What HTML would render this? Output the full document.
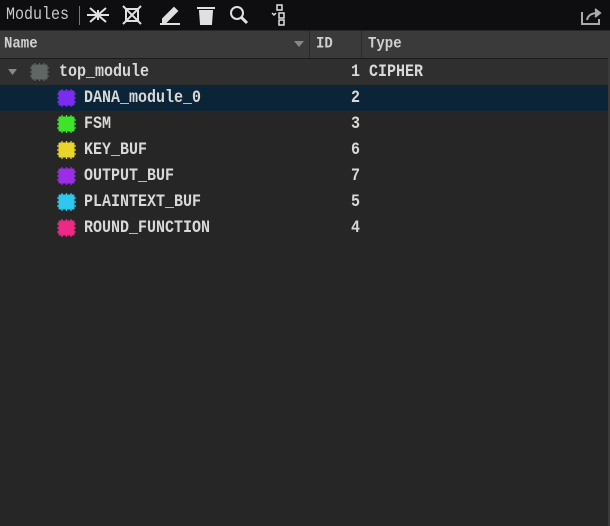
<!DOCTYPE html>
<html><head><style>
body{margin:0;width:610px;height:526px;background:#262626;overflow:hidden;font-family:"Liberation Mono",monospace;color:#dcdcdc;font-size:15px;position:relative}
.tb{position:absolute;left:0;top:0;width:610px;height:30px;background:#0e0e10}
.tb .t{position:absolute;left:6px;top:5px;color:#c8c8c8;font-size:15px;transform:scaleY(1.15);transform-origin:left top}
.hdr{position:absolute;left:0;top:31px;width:610px;height:27px;background:#3a3a3a;border-bottom:1px solid #1c1c1c}
.hdr span{position:absolute;top:4px;color:#d0d0d0;font-weight:bold;font-size:14px;transform:scaleY(1.15);transform-origin:left top}
.sep{position:absolute;top:0;width:1px;height:27px;background:#2a2a2a}
.row{position:absolute;left:0;width:610px;height:26px}
.row span{position:absolute;top:3px;transform:scaleY(1.15);transform-origin:left top;font-weight:bold;color:#d8d8d8}
.chip{position:absolute;top:4px;width:19px;height:18px}
</style></head><body>
<div class="tb">
<span class="t">Modules</span>
<div style="position:absolute;left:79px;top:6px;width:1px;height:19px;background:#777"></div>
<svg style="position:absolute;left:86px;top:4px" width="200" height="22" viewBox="0 0 200 22" fill="none" stroke="#e0e0e0" stroke-width="2">
<path d="M1 11h22M4 4l16 14M20 4L4 18M12 6v10"/>
<rect x="40" y="5" width="12" height="12"/><path d="M37 2l18 18M55 2L37 20"/>
<path d="M77 15l11-11 3 3-11 11h-3z" fill="#e0e0e0"/><path d="M74 20h20"/>
<path d="M111 4h18M114 7h12l-1 13h-10z" fill="#e0e0e0"/>
<circle cx="151" cy="9" r="6"/><path d="M155 13l6 6" stroke-width="3"/>
<g stroke-width="1.5"><rect x="191" y="1" width="5" height="5"/><rect x="193" y="9" width="5" height="5"/><rect x="193" y="16" width="5" height="5"/></g><path d="M186 9l2 2 2-2" stroke-width="1.5"/>
</svg>
<svg style="position:absolute;left:581px;top:7px" width="22" height="18" viewBox="0 0 22 18" fill="none" stroke="#aaa" stroke-width="2">
<path d="M1 5v12h17v-5"/><path d="M6 13c1-5 5-7 11-7" /><path d="M14 2l5 4-5 4" fill="#aaa"/>
</svg>
</div>
<div class="hdr">
<span style="left:4px">Name</span>
<svg style="position:absolute;left:294px;top:10px" width="10" height="6"><path d="M0 0h10L5 6z" fill="#888"/></svg>
<div class="sep" style="left:309px"></div>
<span style="left:316px">ID</span>
<div class="sep" style="left:361px"></div>
<span style="left:368px">Type</span>
</div>
<svg width="0" height="0" style="position:absolute"><defs>
<g id="c"><rect x="2" y="2" width="15" height="14" rx="1"/><path d="M5 0v18M9.5 0v18M14 0v18M0 5h19M0 9h19M0 13h19" stroke-width="1.2" fill="none"/><rect x="2" y="2" width="15" height="14" rx="1"/></g></defs></svg>
<div class="row" style="top:59px;background:#2f2f2f">
<svg style="position:absolute;left:8px;top:10px" width="9" height="6"><path d="M0 0h9L4.5 6z" fill="#888"/></svg>
<svg class="chip" style="left:30px" fill="#5f6664" stroke="#5f6664"><use href="#c"/></svg>
<span style="left:59px">top_module</span><span style="left:351px">1 CIPHER</span>
</div>
<div class="row" style="top:85px;background:#0b2437">
<svg class="chip" style="left:57px" fill="#7a2cf0" stroke="#7a2cf0"><use href="#c"/></svg>
<span style="left:84px">DANA_module_0</span><span style="left:351px">2</span></div>
<div class="row" style="top:111px">
<svg class="chip" style="left:57px" fill="#3de42a" stroke="#3de42a"><use href="#c"/></svg>
<span style="left:84px">FSM</span><span style="left:351px">3</span></div>
<div class="row" style="top:137px">
<svg class="chip" style="left:57px" fill="#e8d42a" stroke="#e8d42a"><use href="#c"/></svg>
<span style="left:84px">KEY_BUF</span><span style="left:351px">6</span></div>
<div class="row" style="top:163px">
<svg class="chip" style="left:57px" fill="#9a2ee6" stroke="#9a2ee6"><use href="#c"/></svg>
<span style="left:84px">OUTPUT_BUF</span><span style="left:351px">7</span></div>
<div class="row" style="top:189px">
<svg class="chip" style="left:57px" fill="#2ec8ee" stroke="#2ec8ee"><use href="#c"/></svg>
<span style="left:84px">PLAINTEXT_BUF</span><span style="left:351px">5</span></div>
<div class="row" style="top:215px">
<svg class="chip" style="left:57px" fill="#ec2a86" stroke="#ec2a86"><use href="#c"/></svg>
<span style="left:84px">ROUND_FUNCTION</span><span style="left:351px">4</span></div>
<div style="position:absolute;right:0;top:31px;width:2px;height:495px;background:#3a3a3a"></div>
</body></html>
